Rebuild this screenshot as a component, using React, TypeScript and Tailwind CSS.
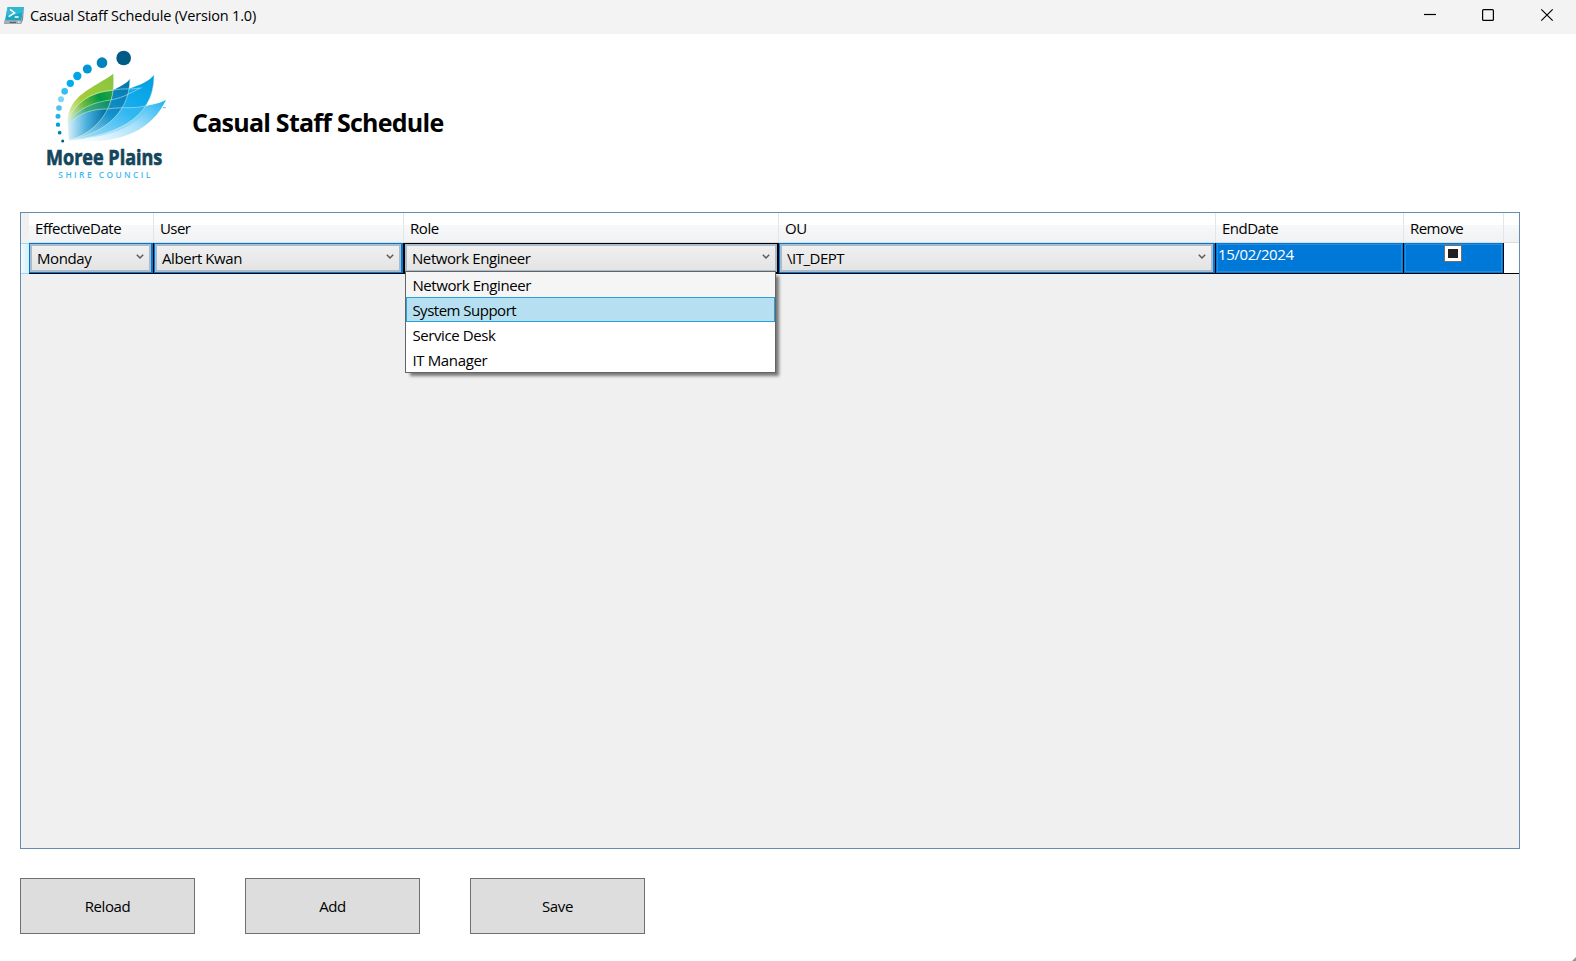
import React from "react";

const Chevron = () => (
  <svg width="8" height="6" viewBox="0 0 8 6" className="mr-[5px] mb-[3px] shrink-0">
    <path d="M0.8 0.8 L4 4 L7.2 0.8" fill="none" stroke="#5a5a5a" strokeWidth="1.5" />
  </svg>
);

type ComboProps = { text: string; spacing: string };

const Combo = ({ text, spacing }: ComboProps) => (
  <div className="flex min-w-0 flex-1 items-center justify-between border-2 border-[#a9bccd] bg-gradient-to-b from-[#f0f0f0] to-[#e4e4e4]">
    <span className={`pb-px leading-[20px] whitespace-nowrap ${spacing}`}>{text}</span>
    <Chevron />
  </div>
);

const headers = [
  { label: "EffectiveDate", width: "w-[125px]", spacing: "tracking-[-0.45px]" },
  { label: "User", width: "w-[250px]", spacing: "tracking-[-0.6px]" },
  { label: "Role", width: "w-[375px]", spacing: "tracking-[-0.4px]" },
  { label: "OU", width: "w-[437px]", spacing: "tracking-[-0.3px]" },
  { label: "EndDate", width: "w-[188px]", spacing: "tracking-[-0.5px]" },
  { label: "Remove", width: "w-[100px]", spacing: "tracking-[-0.55px]" },
];

const options = [
  { label: "Network Engineer", look: "bg-[#f5f5f5] border-[#f5f5f5]", spacing: "tracking-[-0.42px]" },
  { label: "System Support", look: "bg-[#b6dff1] border-[#26a0da]", spacing: "tracking-[-0.5px]" },
  { label: "Service Desk", look: "bg-white border-white", spacing: "tracking-[-0.4px]" },
  { label: "IT Manager", look: "bg-white border-white", spacing: "tracking-[-0.35px]" },
];

const buttons = ["Reload", "Add", "Save"];

const dots = [
  [281, 54, 22, "#005b85"],
  [216, 68, 16, "#0083b8"],
  [172, 87, 13.5, "#0097d6"],
  [142, 108, 12.5, "#00a4e8"],
  [121, 130, 11, "#00aeef"],
  [104, 154, 10, "#35bcf2"],
  [93, 178, 9, "#7dd2f7"],
  [87, 204, 8.5, "#4cc2f1"],
  [84, 229, 7.5, "#22b3ec"],
  [84, 254, 6.5, "#00a0dc"],
  [89, 278, 5.5, "#0082b5"],
  [98, 303, 4.5, "#005b85"],
] as const;

const Logo = () => (
  <svg width="150" height="150" viewBox="0 0 450 450" className="shrink-0 overflow-visible">
    <defs>
      <linearGradient id="lime" x1="0" y1="0.8" x2="0.8" y2="0">
        <stop offset="0" stopColor="#f4f9e4" />
        <stop offset="0.45" stopColor="#a5cd39" />
        <stop offset="1" stopColor="#8cc63f" />
      </linearGradient>
      <linearGradient id="green" x1="0" y1="0.6" x2="1" y2="0">
        <stop offset="0" stopColor="#eef7dc" />
        <stop offset="0.4" stopColor="#6dba3f" />
        <stop offset="0.7" stopColor="#009a44" />
        <stop offset="1" stopColor="#2fa545" />
      </linearGradient>
      <linearGradient id="teal" x1="0" y1="0.6" x2="1" y2="0">
        <stop offset="0" stopColor="#eef8f2" />
        <stop offset="0.45" stopColor="#3fae80" />
        <stop offset="1" stopColor="#008568" />
      </linearGradient>
      <linearGradient id="deep" x1="0" y1="0" x2="1" y2="0">
        <stop offset="0" stopColor="#dcf2fc" />
        <stop offset="0.4" stopColor="#4db1de" />
        <stop offset="0.8" stopColor="#0072a6" />
        <stop offset="1" stopColor="#006b9c" />
      </linearGradient>
      <linearGradient id="mid" x1="0.2" y1="1" x2="0.9" y2="0">
        <stop offset="0" stopColor="#a9def8" />
        <stop offset="0.5" stopColor="#1492cd" />
        <stop offset="1" stopColor="#0079ae" />
      </linearGradient>
      <linearGradient id="sky" x1="0.1" y1="1" x2="0.9" y2="0">
        <stop offset="0" stopColor="#d6f1fd" />
        <stop offset="0.55" stopColor="#19b0f0" />
        <stop offset="1" stopColor="#009fe3" />
      </linearGradient>
      <linearGradient id="pale" x1="0" y1="0.6" x2="1" y2="0">
        <stop offset="0" stopColor="#f4fbff" />
        <stop offset="0.5" stopColor="#a6e0fa" />
        <stop offset="1" stopColor="#18b1f0" />
      </linearGradient>
      <clipPath id="leafClip">
        <path d="M250 101 C190 145 112 165 113 248 L117 300 C175 288 262 225 250 101 Z" />
      </clipPath>
    </defs>
    {dots.map(([cx, cy, r, fill]) => (
      <circle key={cy} cx={cx} cy={cy} r={r} fill={fill} />
    ))}
    <path d="M408 180 C360 205 290 200 225 212 L117 300 C240 314 355 290 408 180 Z" fill="url(#pale)" />
    <path d="M372 105 C340 145 265 145 200 190 L117 300 C235 290 375 245 372 105 Z" fill="url(#sky)" />
    <path d="M229 211 C290 198 340 212 361 193 C320 270 225 292 117 300 Z" fill="#5cc5f4" opacity="0.35" />
    <path d="M300 117 C280 142 240 150 200 175 L117 300 C205 285 298 230 300 117 Z" fill="url(#mid)" />
    <path d="M250 101 C190 145 112 165 113 248 L117 300 C175 288 262 225 250 101 Z" fill="url(#lime)" />
    <g clipPath="url(#leafClip)">
      <path d="M112 242 C145 172 200 157 255 151 V310 H112 Z" fill="url(#green)" />
      <path d="M112 245 C145 205 190 187 255 179 V310 H112 Z" fill="url(#teal)" />
      <path d="M112 255 C140 220 190 207 255 206 V310 H112 Z" fill="url(#deep)" />
    </g>
    <g fill="none" stroke="#d8f1e8" strokeWidth="2" opacity="0.8">
      <path d="M114 240 C145 172 200 155 246 151 C285 143 300 150 329 144" />
      <path d="M114 246 C145 205 195 185 242 180 C290 170 295 160 335 143" />
      <path d="M116 255 C145 217 190 207 232 207 C290 198 325 210 361 192" />
      <path d="M250 101 C262 225 175 288 117 300" />
      <path d="M300 117 C298 230 205 285 117 300" />
      <path d="M372 105 C375 245 235 290 117 300" />
    </g>
    <path d="M399 203 H407" stroke="#4cb4dd" strokeWidth="3" />
    <text
      x="48"
      y="374"
      textLength="349"
      lengthAdjust="spacingAndGlyphs"
      fontFamily="'Open Sans', sans-serif"
      fontWeight="700"
      fontSize="65"
      fill="#13465a"
      stroke="#13465a"
      strokeWidth="2"
    >
      Moree Plains
    </text>
    <text
      x="85"
      y="413"
      textLength="276"
      lengthAdjust="spacing"
      fontFamily="'Open Sans', sans-serif"
      fontWeight="600"
      fontSize="25"
      fill="#3fbbee"
    >
      SHIRE COUNCIL
    </text>
  </svg>
);

const AppIcon = () => (
  <svg width="20" height="18" viewBox="0 0 60 54" className="mb-[4px] ml-[4px] shrink-0">
    <path d="M2 43 H52 L60 5 L57 42 L51 54 H0 Z" fill="#858d92" />
    <path d="M2 43 H53 L51 53 H0 Z" fill="#a9b0b4" />
    <path d="M11 3 H60 L52 43 H3 Z" fill="#1ba7c4" />
    <path d="M11 3 H60 L56 20 C40 23 22 29 6 28 Z" fill="#30b9d3" />
    <path d="M17 49 H36" stroke="#4c5358" strokeWidth="3" />
    <path d="M42 48 H47" stroke="#e8ecee" strokeWidth="4" />
    <path d="M18 10 L32 21 L14 32 M32 33 H44" fill="none" stroke="#fff" strokeWidth="4.5" />
  </svg>
);

export default function App() {
  return (
    <div className="relative flex h-[961px] w-[1576px] flex-col overflow-hidden bg-white font-['Open_Sans',sans-serif] text-[15px] text-black">
      <div className="flex h-[34px] shrink-0 items-center bg-[#f3f3f3]">
        <AppIcon />
        <span className="ml-[6px] flex-1 pb-[2px] text-[14.5px] leading-[20px] tracking-[-0.17px]">
          Casual Staff Schedule (Version 1.0)
        </span>
        <svg width="152" height="34" viewBox="0 0 152 34" fill="none" stroke="#000" strokeWidth="1.2">
          <path d="M0 14.5 H12" />
          <rect x="58.6" y="9.6" width="10.8" height="10.8" rx="1" />
          <path d="M117.3 9.3 L128.7 20.7 M128.7 9.3 L117.3 20.7" />
        </svg>
      </div>

      <div className="flex h-[178px] shrink-0 pt-[6px] pl-[30px]">
        <Logo />
        <h1 className="mt-[66px] ml-[12px] text-[25px] leading-[32px] font-bold tracking-[-0.75px] whitespace-nowrap">
          Casual Staff Schedule
        </h1>
      </div>

      <div className="ml-[20px] flex h-[637px] w-[1500px] shrink-0 flex-col border border-[#688caf] bg-[#f0f0f0]">
        <div className="flex h-[30px] shrink-0">
          <div className="w-[8px] bg-[#f0f0f0]" />
          {headers.map((h) => (
            <div
              key={h.label}
              className={`flex shrink-0 items-center border-r border-b border-r-[#e3e5e7] border-b-[#dadcde] bg-[linear-gradient(#ffffff_0_40%,#f7f8f9_40%,#f1f2f4)] pl-[6px] ${h.width}`}
            >
              <span className={`leading-[20px] ${h.spacing}`}>{h.label}</span>
            </div>
          ))}
          <div className="flex-1 border-b border-[#dadcde] bg-[linear-gradient(#ffffff_0_40%,#f7f8f9_40%,#f1f2f4)]" />
        </div>

        <div className="flex h-[31px] shrink-0">
          <div className="w-[8px] border-y border-[#99d9f5] bg-gradient-to-r from-[#f2fafd] to-[#d3effa]" />
          <div className="flex w-[125px] border-r border-b border-black">
            <div className="flex flex-1 border border-r-2 border-[#0078d7]">
              <Combo text="Monday" spacing="pl-[5px] tracking-[-0.4px]" />
            </div>
          </div>
          <div className="flex w-[249px] border-b border-black">
            <div className="flex flex-1 border border-r-2 border-[#0078d7]">
              <Combo text="Albert Kwan" spacing="pl-[5px] tracking-[-0.42px]" />
            </div>
          </div>
          <div className="relative flex w-[376px] border-t border-r-2 border-b-2 border-l-2 border-black">
            <Combo text="Network Engineer" spacing="pl-[5px] tracking-[-0.42px]" />
            <div className="absolute top-[27px] left-0 z-10 flex w-[371px] flex-col border border-[#646464] bg-white shadow-[4px_4px_3px_-1px_#777]">
              {options.map((o) => (
                <div key={o.label} className={`flex h-[25px] items-center border pl-[5.4px] ${o.look}`}>
                  <span className={`leading-[20px] ${o.spacing}`}>{o.label}</span>
                </div>
              ))}
            </div>
          </div>
          <div className="flex w-[437px] border-r border-b border-black">
            <div className="flex flex-1 border border-r-2 border-[#0078d7]">
              <Combo text="\IT_DEPT" spacing="pl-[5px] tracking-[-0.5px]" />
            </div>
          </div>
          <div className="flex w-[188px] border-r border-b border-black bg-[#0078d7] p-px">
            <div className="flex-1 border border-[#268ce0]">
              <span className="-mt-px block leading-[20px] tracking-[-0.4px] text-white">15/02/2024</span>
            </div>
          </div>
          <div className="flex w-[100px] border-r border-b border-black bg-[#0078d7] p-px">
            <div className="flex flex-1 justify-center border border-[#268ce0] pr-[2px]">
              <div className="flex h-[17px] w-[18px] items-center justify-center border border-[#707070] bg-white">
                <div className="h-[9px] w-[10px] bg-[#212121]" />
              </div>
            </div>
          </div>
          <div className="flex-1 border-b border-black bg-white" />
        </div>
      </div>

      <div className="mt-[29px] ml-[20px] flex gap-[50px]">
        {buttons.map((b) => (
          <button
            key={b}
            className="flex h-[56px] w-[175px] items-center justify-center border border-[#707070] bg-[#dddddd] tracking-[-0.4px]"
          >
            {b}
          </button>
        ))}
      </div>

      <svg width="4" height="4" viewBox="0 0 4 4" className="absolute right-0 bottom-0">
        <path d="M4 0 V4 H0 Z" fill="#8c9aa3" />
      </svg>
    </div>
  );
}
